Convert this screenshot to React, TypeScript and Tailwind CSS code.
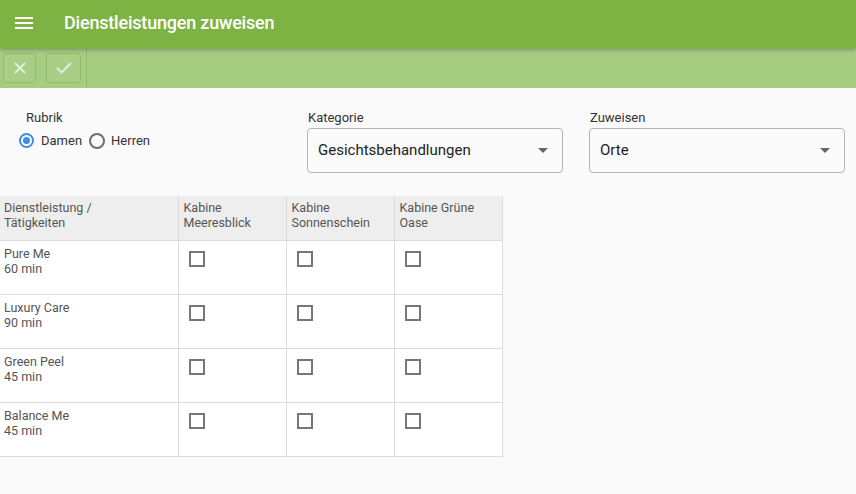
import React from "react";

const rows = [
  { name: "Pure Me", time: "60 min" },
  { name: "Luxury Care", time: "90 min" },
  { name: "Green Peel", time: "45 min" },
  { name: "Balance Me", time: "45 min" },
];

const cabins = [
  ["Kabine", "Meeresblick"],
  ["Kabine", "Sonnenschein"],
  ["Kabine Grüne", "Oase"],
];

function Select({ label, value }: { label: string; value: string }) {
  return (
    <div className="flex flex-col w-[256px]">
      <span className="text-[13px] text-[#333] leading-none h-[11px] ml-[1px]">{label}</span>
      <div className="mt-[6px] h-[45px] border border-[#b5b5b5] rounded-[4px] bg-[#fafafa] flex items-center justify-between pl-[10px] pr-[14px]">
        <span className="text-[15px] text-[#222]">{value}</span>
        <svg width="10" height="5" viewBox="0 0 10 5">
          <path d="M0 0 L10 0 L5 5 Z" fill="#666" />
        </svg>
      </div>
    </div>
  );
}

export default function App() {
  return (
    <div className="w-[856px] h-[494px] bg-[#fafafa] overflow-hidden" style={{ fontFamily: "Roboto, sans-serif" }}>
      <header className="relative z-10 h-[48px] bg-[#7cb342] flex items-center shadow-[0_2px_4px_rgba(0,0,0,0.25)]">
        <svg className="ml-[15px] mt-[-3px]" width="18" height="12" viewBox="0 0 18 12">
          <rect x="0" y="0" width="18" height="2" fill="#fff" />
          <rect x="0" y="5" width="18" height="2" fill="#fff" />
          <rect x="0" y="10" width="18" height="2" fill="#fff" />
        </svg>
        <h1 className="ml-[31px] mt-[-3px] text-white text-[18px] font-medium tracking-[-0.2px]">Dienstleistungen zuweisen</h1>
      </header>

      <div className="h-[40px] bg-[#a6cd82] flex items-center">
        <div className="flex items-center gap-[10px] pl-[3px] pr-[5px] h-full">
          <button className="w-[33px] h-[30px] rounded-[3px] border border-[#93bb70] bg-[#a8cf85] flex items-center justify-center">
            <svg width="12" height="12" viewBox="0 0 12 12">
              <path d="M1 1 L11 11 M11 1 L1 11" stroke="#e4f0d9" strokeWidth="1.8" />
            </svg>
          </button>
          <button className="w-[35px] h-[30px] rounded-[3px] border border-[#93bb70] bg-[#a8cf85] flex items-center justify-center">
            <svg width="16" height="12" viewBox="0 0 16 12">
              <path d="M1 6 L5.5 10.5 L15 1" stroke="#e4f0d9" strokeWidth="1.8" fill="none" />
            </svg>
          </button>
        </div>
        <div className="w-px h-full bg-[#92ba6f]" />
      </div>

      <div className="flex pt-[23px]">
        <div className="w-[307px] pl-[19px]">
          <div className="text-[13px] text-[#333] leading-none h-[11px] pl-[7px]">Rubrik</div>
          <div className="flex items-center mt-[9px] text-[13px] text-[#333]">
            <span className="w-[15px] h-[15px] rounded-full border-2 border-[#3c8ee8] flex items-center justify-center">
              <span className="w-[7px] h-[7px] rounded-full bg-[#3c8ee8]" />
            </span>
            <span className="ml-[7px]">Damen</span>
            <span className="ml-[7px] w-[16px] h-[16px] rounded-full border-2 border-[#6e6e6e]" />
            <span className="ml-[6px]">Herren</span>
          </div>
        </div>
        <Select label="Kategorie" value="Gesichtsbehandlungen" />
        <div className="w-[26px]" />
        <Select label="Zuweisen" value="Orte" />
      </div>

      <table className="mt-[23px] border-collapse text-[12.5px] text-[#555] leading-[15px]">
        <thead>
          <tr className="bg-[#eeeeee] h-[44px]">
            <th className="w-[178px] border-r border-[#dcdcdc] text-left font-normal align-top pt-[4px] pl-[4px]">
              Dienstleistung /<br />Tätigkeiten
            </th>
            {cabins.map((c, i) => (
              <th key={i} className="w-[108px] border-r border-[#dcdcdc] text-left font-normal align-top pt-[4px] pl-[5px]">
                {c[0]}
                <br />
                {c[1]}
              </th>
            ))}
          </tr>
        </thead>
        <tbody>
          {rows.map((r) => (
            <tr key={r.name} className="h-[54px] bg-white border-t border-[#dcdcdc]">
              <td className="border-r border-[#dcdcdc] align-top pt-[5px] pl-[4px]">
                {r.name}
                <br />
                {r.time}
              </td>
              {cabins.map((_, i) => (
                <td key={i} className="border-r border-[#dcdcdc] align-top pt-[10px] pl-[10px]">
                  <span className="block w-[16px] h-[16px] border-2 border-[#777] bg-white" />
                </td>
              ))}
            </tr>
          ))}
          <tr className="h-0 border-t border-[#dcdcdc]"><td colSpan={4} /></tr>
        </tbody>
      </table>
    </div>
  );
}
